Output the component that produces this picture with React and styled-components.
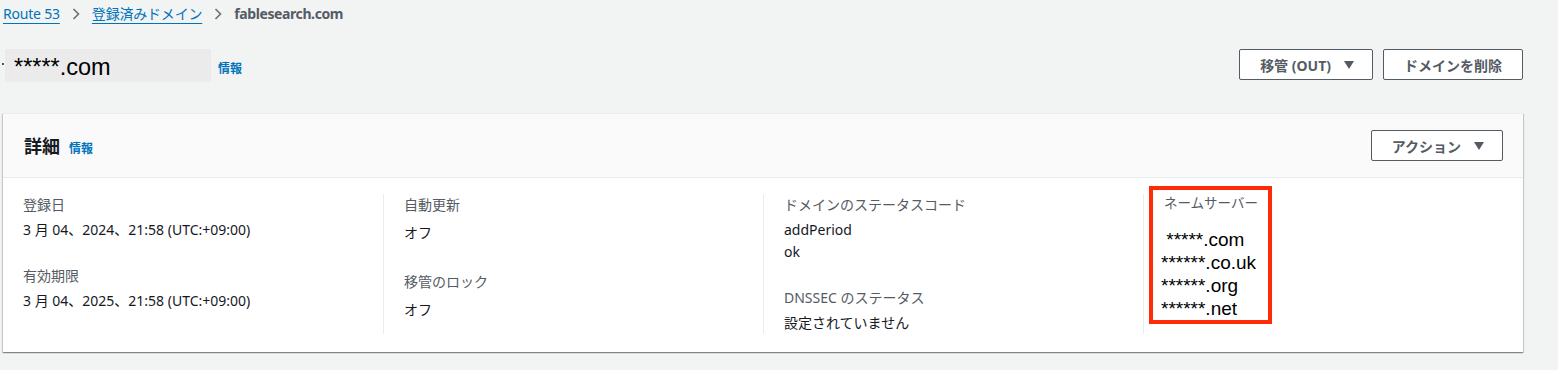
import React from "react";
import styled, { createGlobalStyle } from "styled-components";

const GlobalStyle = createGlobalStyle`
  body {
    margin: 0;
    background: #f2f3f3;
    font-family: "Noto Sans", "Noto Sans CJK JP", sans-serif;
    color: #16191f;
  }
`;

const Page = styled.div`
  width: 1558px;
  height: 370px;
  overflow: hidden;
  background: #f2f3f3;
`;

const Breadcrumbs = styled.nav`
  display: flex;
  align-items: center;
  height: 28px;
  padding-left: 3px;
  font-size: 14px;
  line-height: 20px;
`;

const Crumb = styled.a`
  color: #0073bb;
  text-decoration: underline;
  text-underline-offset: 4px;
  text-decoration-thickness: 1px;
  letter-spacing: -0.2px;
`;

const CurrentCrumb = styled.span`
  color: #545b64;
  font-weight: 700;
  letter-spacing: -0.4px;
`;

const Chevron = styled.svg`
  width: 8px;
  height: 12px;
  margin: 0 12px;
  display: block;
`;

const HeaderRow = styled.div`
  display: flex;
  justify-content: space-between;
  align-items: flex-start;
  margin-top: 21px;
  padding-right: 35px;
`;

const TitleGroup = styled.div`
  display: flex;
  align-items: center;
`;

const Speck = styled.span`
  width: 2px;
  height: 2px;
  background: #555;
  margin: 0 1px 4px 2px;
`;

const MaskedTitle = styled.h1`
  margin: 0;
  width: 206px;
  height: 33px;
  box-sizing: border-box;
  padding: 2px 0 0 9px;
  background: #ebebeb;
  font-family: "Liberation Sans", Arial, sans-serif;
  font-weight: 400;
  font-size: 23.5px;
  line-height: 33px;
  color: #000;
`;

const Info = styled.a`
  color: #0073bb;
  font-weight: 700;
  font-size: 12px;
  line-height: 16px;
  margin-left: ${(p) => p.$gap || 7}px;
  margin-top: ${(p) => p.$drop || 0}px;
`;

const ButtonGroup = styled.div`
  display: flex;
  gap: 10px;
`;

const Button = styled.button`
  display: flex;
  align-items: center;
  height: 31px;
  box-sizing: border-box;
  padding: 0 ${(p) => (p.$caret ? 18 : 20)}px 0 20px;
  background: #fff;
  border: 1px solid #545b64;
  border-radius: 2px;
  font-family: inherit;
  font-size: 14px;
  font-weight: 700;
  color: #545b64;
`;

const Caret = styled.svg`
  width: 10px;
  height: 8px;
  margin-left: 13px;
  display: block;
`;

const Card = styled.section`
  margin: 31px 35px 0 3px;
  background: #fff;
  border-top: 1px solid #eaeded;
  box-shadow: 0 1px 1px 0 rgba(0, 28, 36, 0.3), 1px 1px 1px 0 rgba(0, 28, 36, 0.15),
    -1px 1px 1px 0 rgba(0, 28, 36, 0.15);
`;

const CardHeader = styled.header`
  display: flex;
  align-items: center;
  justify-content: space-between;
  height: 63px;
  padding: 0 20px 0 21px;
  background: #fafafa;
  border-bottom: 1px solid #eaeded;
`;

const HeadingGroup = styled.div`
  display: flex;
  align-items: baseline;
`;

const CardTitle = styled.h2`
  margin: 0;
  font-size: 18px;
  font-weight: 700;
  line-height: 24px;
  color: #16191f;
`;

const CardBody = styled.div`
  display: grid;
  grid-template-columns: repeat(4, 1fr);
  padding: 16px 0 18px;
`;

const Column = styled.div`
  padding: 0 20px 0 ${(p) => p.$padLeft ?? 20}px;
  border-left: ${(p) => (p.$first ? "none" : "1px solid #eaeded")};
`;

const Field = styled.div`
  & + & {
    margin-top: 24px;
  }
`;

const Label = styled.div`
  font-size: 14px;
  line-height: 20px;
  color: #545b64;
  padding-top: 1px;
`;

const Value = styled.div`
  margin-top: 4px;
  font-size: 14px;
  line-height: ${(p) => p.$lh || 22}px;
  color: #16191f;
`;

const Highlight = styled.div`
  width: 123px;
  height: 138px;
  box-sizing: border-box;
  margin-top: -8px;
  padding: 3px 8px 0;
  border: 4px solid #fe2c06;
`;

const HighlightLabel = styled.div`
  margin-left: 3px;
  font-size: 13.5px;
  line-height: 20px;
  color: #545b64;
  white-space: nowrap;
`;

const NameServers = styled.div`
  margin-top: 15px;
  font-family: "Liberation Sans", Arial, sans-serif;
  font-size: 19px;
  line-height: 23px;
  color: #000;
  white-space: pre;
`;

const ChevronIcon = () => (
  <Chevron viewBox="0 0 8 12">
    <path d="M1.5 1 L6.5 6 L1.5 11" fill="none" stroke="#687078" strokeWidth="1.6" />
  </Chevron>
);

const CaretIcon = () => (
  <Caret viewBox="0 0 10 8">
    <polygon points="0,0 10,0 5,8" fill="#545b64" />
  </Caret>
);

export default function App() {
  return (
    <Page>
      <GlobalStyle />
      <Breadcrumbs>
        <Crumb>Route 53</Crumb>
        <ChevronIcon />
        <Crumb>登録済みドメイン</Crumb>
        <ChevronIcon />
        <CurrentCrumb>fablesearch.com</CurrentCrumb>
      </Breadcrumbs>

      <HeaderRow>
        <TitleGroup>
          <Speck />
          <MaskedTitle>*****.com</MaskedTitle>
          <Info $drop={6}>情報</Info>
        </TitleGroup>
        <ButtonGroup>
          <Button $caret>
            移管 (OUT)
            <CaretIcon />
          </Button>
          <Button>ドメインを削除</Button>
        </ButtonGroup>
      </HeaderRow>

      <Card>
        <CardHeader>
          <HeadingGroup>
            <CardTitle>詳細</CardTitle>
            <Info $gap={9}>情報</Info>
          </HeadingGroup>
          <Button $caret>
            アクション
            <CaretIcon />
          </Button>
        </CardHeader>
        <CardBody>
          <Column $first>
            <Field>
              <Label>登録日</Label>
              <Value>3 月 04、2024、21:58 (UTC:+09:00)</Value>
            </Field>
            <Field>
              <Label>有効期限</Label>
              <Value>3 月 04、2025、21:58 (UTC:+09:00)</Value>
            </Field>
          </Column>
          <Column>
            <Field>
              <Label>自動更新</Label>
              <Value $lh={28}>オフ</Value>
            </Field>
            <Field>
              <Label>移管のロック</Label>
              <Value $lh={28}>オフ</Value>
            </Field>
          </Column>
          <Column>
            <Field>
              <Label>ドメインのステータスコード</Label>
              <Value>
                addPeriod
                <br />
                ok
              </Value>
            </Field>
            <Field>
              <Label>DNSSEC のステータス</Label>
              <Value>設定されていません</Value>
            </Field>
          </Column>
          <Column $padLeft={5}>
            <Highlight>
              <HighlightLabel>ネームサーバー</HighlightLabel>
              <NameServers>
                {" *****.com\n******.co.uk\n******.org\n******.net"}
              </NameServers>
            </Highlight>
          </Column>
        </CardBody>
      </Card>
    </Page>
  );
}
